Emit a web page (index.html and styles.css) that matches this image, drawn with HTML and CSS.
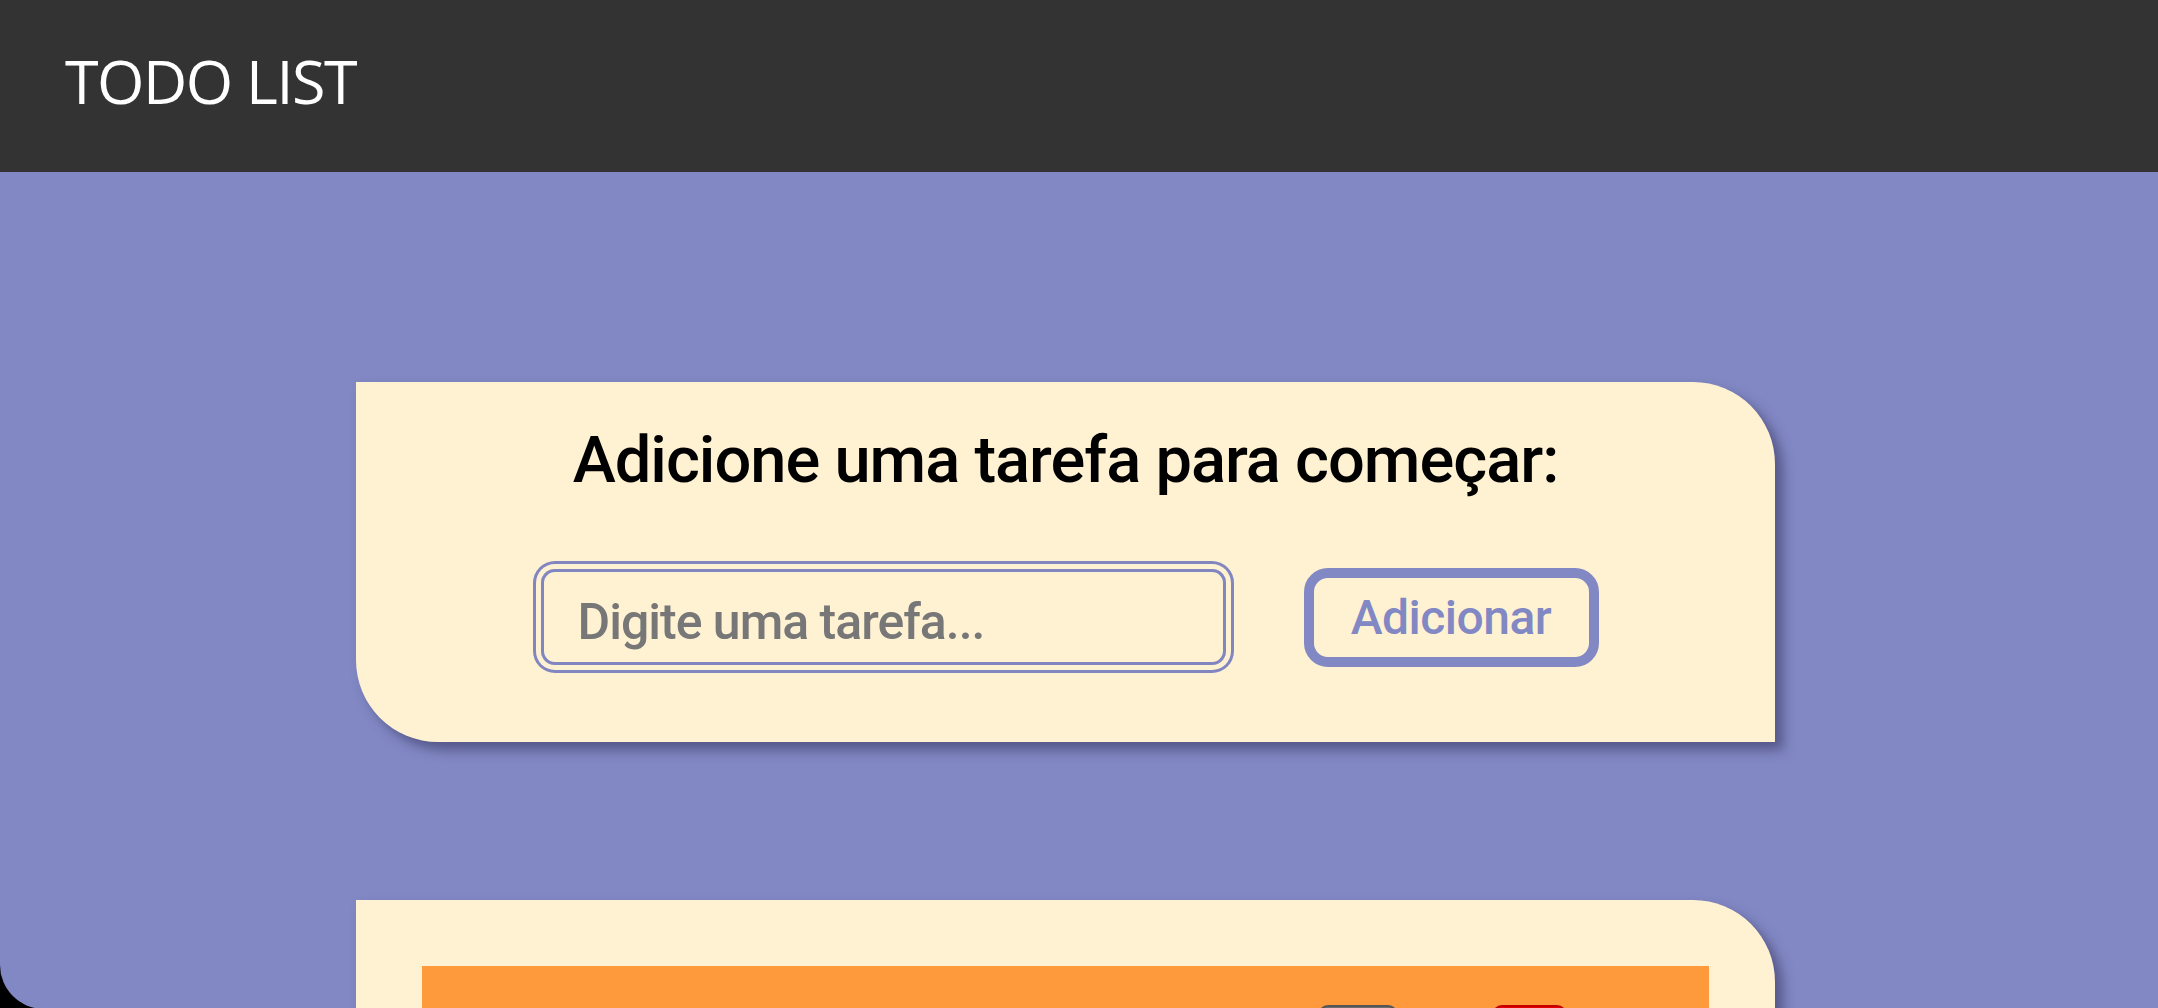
FILE: index.html
```html
<!DOCTYPE html>
<html lang="pt-BR">
<head>
<meta charset="utf-8">
<title>TODO LIST</title>
<link rel="stylesheet" href="styles.css">
</head>
<body>
  <header class="topbar">
    <h1 class="brand">TODO LIST</h1>
  </header>
  <main class="stage">
    <section class="card card-add">
      <h2 class="card-title">Adicione uma tarefa para começar:</h2>
      <form class="add-row">
        <input class="task-input" type="text" placeholder="Digite uma tarefa...">
        <button class="add-btn" type="button">Adicionar</button>
      </form>
    </section>
    <section class="card card-list">
      <div class="task">
        <span class="task-text"></span>
        <button class="task-btn btn-edit" type="button" aria-label="Editar"></button>
        <button class="task-btn btn-delete" type="button" aria-label="Excluir"></button>
      </div>
    </section>
  </main>
</body>
</html>
```
FILE: styles.css
```css
html, body {
  margin: 0;
  padding: 0;
  height: 100%;
  background: #000;
  overflow: hidden;
}

.topbar {
  height: 172px;
  box-sizing: border-box;
  background: #333333;
  display: flex;
  align-items: center;
  padding: 0 0 12px 65px;
}

.brand {
  margin: 0;
  font-family: "Open Sans", "Noto Sans", sans-serif;
  font-weight: 400;
  font-size: 61px;
  color: #ffffff;
  letter-spacing: -1.5px;
}

.stage {
  background: #8288c4;
  height: calc(100vh - 171px);
  border-bottom-left-radius: 44px;
  padding-top: 210px;
  box-sizing: border-box;
}

.card {
  width: 1419px;
  margin-left: 356px;
  box-sizing: border-box;
  background: #fff2d3;
  box-shadow: 8px 8px 12px rgba(40, 40, 80, 0.5);
}

.card-add {
  border-radius: 0 82px 0 82px;
  padding: 46px 0 69px;
  display: flex;
  flex-direction: column;
  align-items: center;
  margin-bottom: 158px;
}

.card-title {
  margin: 0;
  font-family: Roboto, "Noto Sans", sans-serif;
  font-weight: 500;
  font-size: 65px;
  line-height: 1;
  letter-spacing: -1px;
  color: #000;
}

.add-row {
  margin: 68px 0 0;
  display: flex;
  align-items: center;
  gap: 70px;
}

.task-input {
  width: 685px;
  height: 96px;
  margin: 8px;
  box-sizing: border-box;
  border: 3px solid #8286c0;
  border-radius: 14px;
  box-shadow: 0 0 0 5px #fff2d3, 0 0 0 8px #8286c0;
  background: transparent;
  padding: 10px 34px 0;
  font-family: Roboto, "Noto Sans", sans-serif;
  font-weight: 500;
  font-size: 50px;
  letter-spacing: -1px;
  color: #333;
  outline: none;
}

.task-input::placeholder {
  color: #777777;
}

.add-btn {
  width: 295px;
  height: 99px;
  box-sizing: border-box;
  border: 10px solid #8288c4;
  border-radius: 24px;
  background: transparent;
  font-family: Roboto, "Noto Sans", sans-serif;
  font-weight: 500;
  font-size: 48px;
  letter-spacing: -0.5px;
  color: #8288c4;
  padding: 0;
  cursor: pointer;
}

.card-list {
  border-radius: 0 82px 0 0;
  padding: 66px 66px 66px;
}

.task {
  background: #ff9a3c;
  min-height: 220px;
  display: flex;
  align-items: flex-start;
  padding: 39px 142px 39px 40px;
  gap: 94px;
}

.task-text {
  flex: 1;
}

.task-btn {
  height: 64px;
  border-radius: 10px;
  padding: 0;
}

.btn-edit {
  width: 80px;
  background: #6e6e6e;
  border: 2px solid #555;
}

.btn-delete {
  width: 75px;
  background: #e60000;
  border: 2px solid #c40000;
}
```
